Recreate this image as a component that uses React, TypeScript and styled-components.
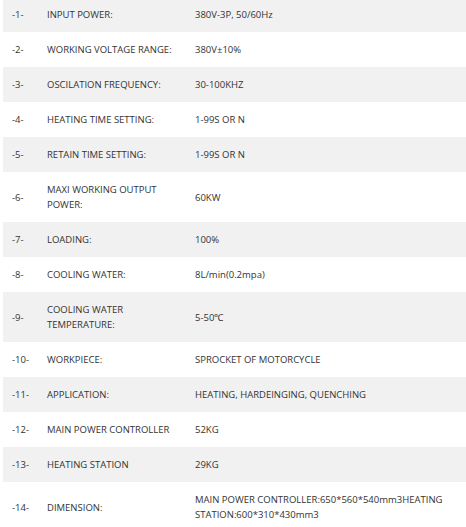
import React from "react";
import styled, { createGlobalStyle } from "styled-components";

const Global = createGlobalStyle`
  html, body { margin: 0; padding: 0; background: #fff; overflow: hidden; }
  body { font-family: "Open Sans", "Liberation Sans", sans-serif; }
`;

const Table = styled.div`
  margin: -3px 0 0 3px;
  width: 480px;
  display: flex;
  flex-direction: column;
`;

const Row = styled.div<{ $shade: boolean }>`
  display: grid;
  grid-template-columns: 35px 148px 1fr;
  align-items: center;
  background: ${(p) => (p.$shade ? "#f1f1f1" : "#ffffff")};
  padding: 10px 0;
`;

const Cell = styled.div`
  padding: 0 9px;
  font-size: 9.5px;
  line-height: 15px;
  color: #333;
  text-transform: none;
`;

const rows: [string, string, string][] = [
  ["-1-", "INPUT POWER:", "380V-3P, 50/60Hz"],
  ["-2-", "WORKING VOLTAGE RANGE:", "380V±10%"],
  ["-3-", "OSCILATION FREQUENCY:", "30-100KHZ"],
  ["-4-", "HEATING TIME SETTING:", "1-99S OR N"],
  ["-5-", "RETAIN TIME SETTING:", "1-99S OR N"],
  ["-6-", "MAXI WORKING OUTPUT POWER:", "60KW"],
  ["-7-", "LOADING:", "100%"],
  ["-8-", "COOLING WATER:", "8L/min(0.2mpa)"],
  ["-9-", "COOLING WATER TEMPERATURE:", "5-50℃"],
  ["-10-", "WORKPIECE:", "SPROCKET OF MOTORCYCLE"],
  ["-11-", "APPLICATION:", "HEATING, HARDEINGING, QUENCHING"],
  ["-12-", "MAIN POWER CONTROLLER", "52KG"],
  ["-13-", "HEATING STATION", "29KG"],
  ["-14-", "DIMENSION:", "MAIN POWER CONTROLLER:650*560*540mm3HEATING STATION:600*310*430mm3"],
];

export default function App() {
  return (
    <>
      <Global />
      <Table>
        {rows.map((r, i) => (
          <Row key={i} $shade={i % 2 === 0}>
            <Cell>{r[0]}</Cell>
            <Cell>{r[1]}</Cell>
            <Cell>{r[2]}</Cell>
          </Row>
        ))}
      </Table>
    </>
  );
}
